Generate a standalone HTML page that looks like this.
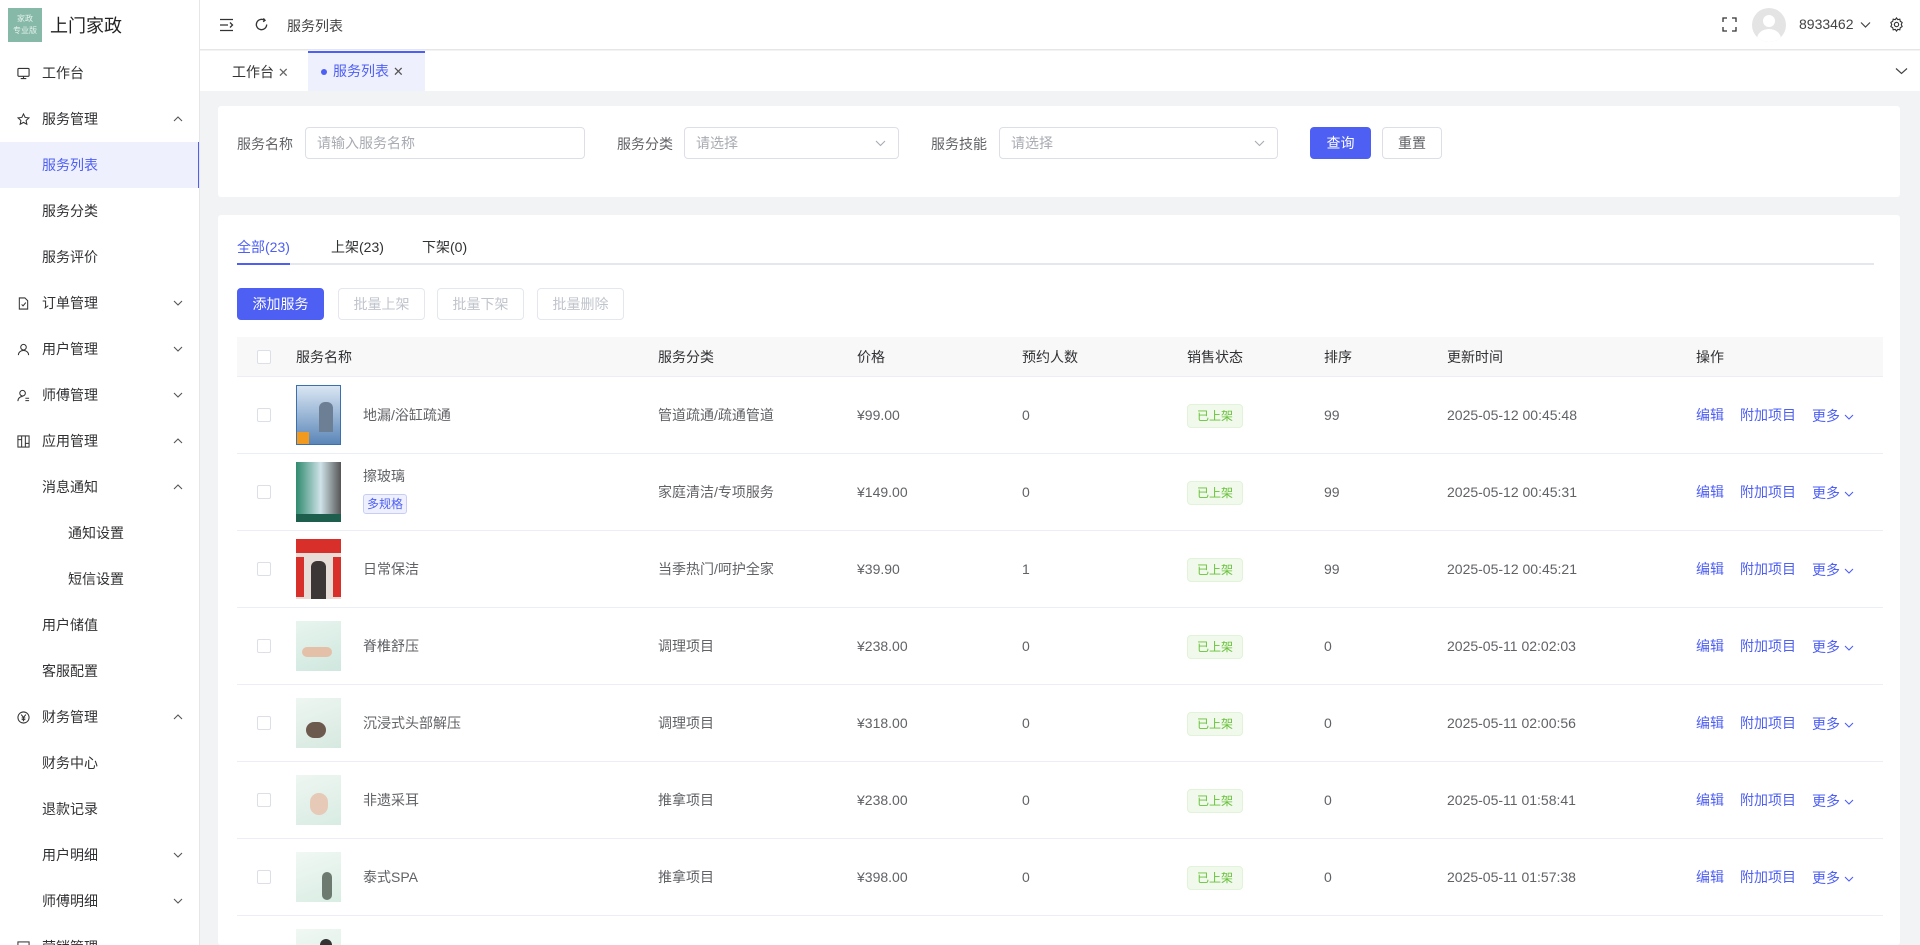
<!DOCTYPE html>
<html style="width:1920px;height:945px;overflow:hidden"><head><meta charset="utf-8"><style>
*{margin:0;padding:0;box-sizing:border-box}
body{width:1920px;height:945px;overflow:hidden;background:#f2f3f5;font-family:"Liberation Sans","Noto Sans CJK SC",sans-serif;font-size:14px;color:#333;position:relative}
.abs{position:absolute}
#side{position:absolute;left:0;top:0;width:200px;height:945px;background:#fff;border-right:1px solid #e6e6e6;overflow:hidden}
.mi{position:absolute;left:0;width:200px;height:46px;line-height:46px;color:#303133;font-size:14px}
.mi .t{position:absolute;left:42px}
.mi svg.ic{position:absolute;left:17px;top:17px}
.mi .ar{position:absolute;left:173px;top:19px}
.mi.act{background:#eef0fd;color:#4e5ff3;border-right:2px solid #4e5ff3}
#hdr{position:absolute;left:200px;top:0;width:1720px;height:50px;background:#fff;border-bottom:1px solid #e6e6e6}
#tabs{position:absolute;left:200px;top:51px;width:1720px;height:40px;background:#fff}
.card{position:absolute;background:#fff;border-radius:3px}
.inp{position:absolute;height:32px;border:1px solid #dcdfe6;border-radius:4px;color:#a8abb2;font-size:14px;line-height:30px;padding-left:11px;background:#fff}
.btn{position:absolute;height:32px;border-radius:4px;font-size:14px;line-height:30px;text-align:center}
.th{position:absolute;top:0;line-height:40px;color:#303133;font-size:14px}
.cell{position:absolute;color:#606266;font-size:14px;line-height:20px}
.cb{position:absolute;left:20px;width:14px;height:14px;border:1px solid #dcdfe6;border-radius:2px;background:#fff}
.tag{position:absolute;width:56px;height:24px;background:#f0f9eb;border:1px solid #e1f3d8;border-radius:4px;color:#67c23a;font-size:12px;line-height:22px;text-align:center}
.lnk{position:absolute;color:#4e5ff3;font-size:14px;line-height:20px}
.row{position:absolute;left:0;width:1646px;height:77px;border-bottom:1px solid #ebeef5}
.img{position:absolute;left:59px;top:8px;width:45px;height:60px}
</style></head><body>
<div id="side">
 <div class="abs" style="left:8px;top:8px;width:34px;height:34px;background:#86b9a7;color:#e6f2ee;font-size:8px;line-height:12px;text-align:center;padding-top:5px">家政<br>专业版</div>
 <div class="abs" style="left:50px;top:12px;font-size:18px;color:#222">上门家政</div>

 <div class="mi" style="top:50px"><svg class="ic" width="13" height="13" viewBox="0 0 14 14" fill="none" stroke="#333" stroke-width="1.2"><rect x="1" y="1.5" width="12" height="8.5" rx="1"/><path d="M7 10v2.5M4 12.5h6"/></svg><span class="t">工作台</span></div>
 <div class="mi" style="top:96px"><svg class="ic" width="13" height="13" viewBox="0 0 14 14" fill="none" stroke="#333" stroke-width="1.1"><path d="M7 1l1.8 3.8 4 .5-3 2.8.8 4L7 10.1 3.4 12.1l.8-4-3-2.8 4-.5z"/></svg><span class="t">服务管理</span><svg class="ar" width="10" height="8" viewBox="0 0 10 8"><path d="M1 6l4-4 4 4" fill="none" stroke="#555" stroke-width="1.1"/></svg></div>
 <div class="mi act" style="top:142px"><span class="t">服务列表</span></div>
 <div class="mi" style="top:188px"><span class="t">服务分类</span></div>
 <div class="mi" style="top:234px"><span class="t">服务评价</span></div>
 <div class="mi" style="top:280px"><svg class="ic" width="13" height="13" viewBox="0 0 14 14" fill="none" stroke="#333" stroke-width="1.1"><path d="M2.5 1h6l3 3v9h-9z"/><path d="M5 8l1.5 1.5L9.5 6"/></svg><span class="t">订单管理</span><svg class="ar" width="10" height="8" viewBox="0 0 10 8"><path d="M1 2l4 4 4-4" fill="none" stroke="#555" stroke-width="1.1"/></svg></div>
 <div class="mi" style="top:326px"><svg class="ic" width="13" height="13" viewBox="0 0 14 14" fill="none" stroke="#333" stroke-width="1.1"><circle cx="7" cy="4.5" r="3"/><path d="M1.5 13c0-3 2.5-5 5.5-5s5.5 2 5.5 5"/></svg><span class="t">用户管理</span><svg class="ar" width="10" height="8" viewBox="0 0 10 8"><path d="M1 2l4 4 4-4" fill="none" stroke="#555" stroke-width="1.1"/></svg></div>
 <div class="mi" style="top:372px"><svg class="ic" width="13" height="13" viewBox="0 0 14 14" fill="none" stroke="#333" stroke-width="1.1"><circle cx="6" cy="4.5" r="3"/><path d="M1 13c0-3 2.3-5 5-5M9 10h4M9 12.5h4"/></svg><span class="t">师傅管理</span><svg class="ar" width="10" height="8" viewBox="0 0 10 8"><path d="M1 2l4 4 4-4" fill="none" stroke="#555" stroke-width="1.1"/></svg></div>
 <div class="mi" style="top:418px"><svg class="ic" width="13" height="13" viewBox="0 0 14 14" fill="none" stroke="#333" stroke-width="1.1"><rect x="1" y="1" width="12" height="12"/><path d="M5 1v12M9 1v12M1 5h4M9 9h4"/></svg><span class="t">应用管理</span><svg class="ar" width="10" height="8" viewBox="0 0 10 8"><path d="M1 6l4-4 4 4" fill="none" stroke="#555" stroke-width="1.1"/></svg></div>
 <div class="mi" style="top:464px"><span class="t">消息通知</span><svg class="ar" width="10" height="8" viewBox="0 0 10 8"><path d="M1 6l4-4 4 4" fill="none" stroke="#555" stroke-width="1.1"/></svg></div>
 <div class="mi" style="top:510px"><span class="t" style="left:68px">通知设置</span></div>
 <div class="mi" style="top:556px"><span class="t" style="left:68px">短信设置</span></div>
 <div class="mi" style="top:602px"><span class="t">用户储值</span></div>
 <div class="mi" style="top:648px"><span class="t">客服配置</span></div>
 <div class="mi" style="top:694px"><svg class="ic" width="13" height="13" viewBox="0 0 14 14" fill="none" stroke="#333" stroke-width="1.1"><circle cx="7" cy="7" r="6"/><path d="M4.5 3.8L7 7l2.5-3.2M7 7v4M5 7.5h4M5 9.3h4"/></svg><span class="t">财务管理</span><svg class="ar" width="10" height="8" viewBox="0 0 10 8"><path d="M1 6l4-4 4 4" fill="none" stroke="#555" stroke-width="1.1"/></svg></div>
 <div class="mi" style="top:740px"><span class="t">财务中心</span></div>
 <div class="mi" style="top:786px"><span class="t">退款记录</span></div>
 <div class="mi" style="top:832px"><span class="t">用户明细</span><svg class="ar" width="10" height="8" viewBox="0 0 10 8"><path d="M1 2l4 4 4-4" fill="none" stroke="#555" stroke-width="1.1"/></svg></div>
 <div class="mi" style="top:878px"><span class="t">师傅明细</span><svg class="ar" width="10" height="8" viewBox="0 0 10 8"><path d="M1 2l4 4 4-4" fill="none" stroke="#555" stroke-width="1.1"/></svg></div>
 <div class="mi" style="top:924px"><svg class="ic" width="13" height="13" viewBox="0 0 14 14" fill="none" stroke="#333" stroke-width="1.1"><rect x="1" y="1" width="12" height="12"/></svg><span class="t">营销管理</span></div>
</div>

<div id="hdr">
 <svg class="abs" style="left:19px;top:18px" width="15" height="14" viewBox="0 0 15 14" fill="none" stroke="#333" stroke-width="1.3"><path d="M1 1.5h13M1 7h8M1 12.5h13M11 4.5l2.5 2.5L11 9.5"/></svg>
 <svg class="abs" style="left:54px;top:17px" width="15" height="15" viewBox="0 0 16 16" fill="none" stroke="#333" stroke-width="1.4"><path d="M13.5 8A5.5 5.5 0 1 1 11 3.4"/><path d="M10 1.5l1.8 2-2 1.6"/></svg>
 <div class="abs" style="left:87px;top:16px;color:#444">服务列表</div>
 <svg class="abs" style="left:1522px;top:17px" width="15" height="15" viewBox="0 0 15 15" fill="none" stroke="#333" stroke-width="1.3"><path d="M1 5V1h4M10 1h4v4M14 10v4h-4M5 14H1v-4"/></svg>
 <div class="abs" style="left:1552px;top:8px;width:34px;height:34px;border-radius:50%;background:#e4e4e4;overflow:hidden"><div class="abs" style="left:11px;top:7px;width:12px;height:12px;border-radius:50%;background:#fff"></div><div class="abs" style="left:5px;top:21px;width:24px;height:20px;border-radius:50%;background:#fff"></div></div>
 <div class="abs" style="left:1599px;top:16px;color:#444">8933462</div>
 <svg class="abs" style="left:1660px;top:21px" width="11" height="8" viewBox="0 0 11 8"><path d="M1 1.5l4.5 4.5 4.5-4.5" fill="none" stroke="#444" stroke-width="1.2"/></svg>
 <svg class="abs" style="left:1689px;top:17px" width="15" height="15" viewBox="0 0 16 16" fill="none" stroke="#333" stroke-width="1.2"><circle cx="8" cy="8" r="2.3"/><path d="M8 1l1.3 1.8 2.2-.5.5 2.2L14 5.8l-.9 2.2.9 2.2-2 1.3-.5 2.2-2.2-.5L8 15l-1.3-1.8-2.2.5-.5-2.2L2 10.2 2.9 8 2 5.8l2-1.3.5-2.2 2.2.5z"/></svg>
</div>

<div id="tabs">
 <div class="abs" style="left:32px;top:11px;color:#333">工作台 <span style="font-size:13px;color:#666">✕</span></div>
 <div class="abs" style="left:108px;top:0;width:117px;height:40px;background:#eef0fd;border-top:2px solid #4e5ff3;color:#4e5ff3;line-height:36px;padding-left:13px"><span style="display:inline-block;width:6px;height:6px;border-radius:50%;background:#4e5ff3;vertical-align:middle;margin-right:6px"></span>服务列表 <span style="font-size:13px;color:#555">✕</span></div>
 <svg class="abs" style="left:1695px;top:16px" width="13" height="8" viewBox="0 0 13 8"><path d="M1 1.5l5.5 5 5.5-5" fill="none" stroke="#444" stroke-width="1.2"/></svg>
</div>

<div class="card" style="left:218px;top:106px;width:1682px;height:91px">
 <div class="abs" style="left:19px;top:28px;color:#606266">服务名称</div>
 <div class="inp" style="left:87px;top:21px;width:280px">请输入服务名称</div>
 <div class="abs" style="left:399px;top:28px;color:#606266">服务分类</div>
 <div class="inp" style="left:466px;top:21px;width:215px">请选择<svg class="abs" style="right:12px;top:12px" width="11" height="7" viewBox="0 0 11 7"><path d="M1 1l4.5 4.5L10 1" fill="none" stroke="#a8abb2" stroke-width="1.1"/></svg></div>
 <div class="abs" style="left:713px;top:28px;color:#606266">服务技能</div>
 <div class="inp" style="left:781px;top:21px;width:279px">请选择<svg class="abs" style="right:12px;top:12px" width="11" height="7" viewBox="0 0 11 7"><path d="M1 1l4.5 4.5L10 1" fill="none" stroke="#a8abb2" stroke-width="1.1"/></svg></div>
 <div class="btn" style="left:1092px;top:21px;width:61px;background:#4e5ff3;color:#fff;border:1px solid #4e5ff3">查询</div>
 <div class="btn" style="left:1164px;top:21px;width:60px;border:1px solid #dcdfe6;color:#606266">重置</div>
</div>

<div class="card" style="left:218px;top:215px;width:1682px;height:730px;overflow:hidden">
 <div class="abs" style="left:19px;top:22px;color:#4e5ff3">全部(23)</div>
 <div class="abs" style="left:113px;top:22px;color:#303133">上架(23)</div>
 <div class="abs" style="left:204px;top:22px;color:#303133">下架(0)</div>
 <div class="abs" style="left:19px;top:48px;width:1637px;height:2px;background:#e4e7ed"></div>
 <div class="abs" style="left:19px;top:48px;width:53px;height:2px;background:#4e5ff3"></div>
 <div class="btn" style="left:19px;top:73px;width:87px;background:#4e5ff3;color:#fff;border:1px solid #4e5ff3">添加服务</div>
 <div class="btn" style="left:120px;top:73px;width:87px;border:1px solid #e4e7ed;color:#c0c4cc">批量上架</div>
 <div class="btn" style="left:219px;top:73px;width:87px;border:1px solid #e4e7ed;color:#c0c4cc">批量下架</div>
 <div class="btn" style="left:319px;top:73px;width:87px;border:1px solid #e4e7ed;color:#c0c4cc">批量删除</div>

 <div class="abs" style="left:19px;top:122px;width:1646px;height:40px;background:#f8f8f9;border-bottom:1px solid #ebeef5">
   <div class="cb" style="top:13px"></div>
   <div class="th" style="left:59px">服务名称</div>
   <div class="th" style="left:421px">服务分类</div>
   <div class="th" style="left:620px">价格</div>
   <div class="th" style="left:785px">预约人数</div>
   <div class="th" style="left:950px">销售状态</div>
   <div class="th" style="left:1087px">排序</div>
   <div class="th" style="left:1210px">更新时间</div>
   <div class="th" style="left:1459px">操作</div>
 </div>

<div class="abs" style="left:19px;top:162px;width:1646px;height:568px;overflow:hidden">
 <div class="row" style="top:0">
  <div class="cb" style="top:31px"></div>
  <div class="img" style="background:linear-gradient(180deg,#d9e6f3,#5b86b8);border:1px solid #3a6fb0"><div style="position:absolute;left:0;bottom:0;width:12px;height:12px;background:#f29a1f"></div><div style="position:absolute;left:22px;top:16px;width:14px;height:30px;background:#6d7f94;border-radius:6px 6px 0 0"></div></div>
  <div class="cell" style="left:126px;top:28px">地漏/浴缸疏通</div>
  <div class="cell" style="left:421px;top:28px">管道疏通/疏通管道</div>
  <div class="cell" style="left:620px;top:28px">¥99.00</div>
  <div class="cell" style="left:785px;top:28px">0</div>
  <div class="tag" style="left:950px;top:27px">已上架</div>
  <div class="cell" style="left:1087px;top:28px">99</div>
  <div class="cell" style="left:1210px;top:28px">2025-05-12 00:45:48</div>
  <div class="lnk" style="left:1459px;top:28px">编辑</div><div class="lnk" style="left:1503px;top:28px">附加项目</div><div class="lnk" style="left:1575px;top:29px">更多 <svg width="10" height="7" viewBox="0 0 10 7"><path d="M1 1l4 4 4-4" fill="none" stroke="#4e5ff3" stroke-width="1.1"/></svg></div>
 </div>
 <div class="row" style="top:77px">
  <div class="cb" style="top:31px"></div>
  <div class="img" style="background:linear-gradient(90deg,#2f8a6e,#cfe2e8 55%,#555 100%)"><div style="position:absolute;left:0;bottom:0;width:45px;height:8px;background:#1d5f4c"></div></div>
  <div class="cell" style="left:126px;top:12px">擦玻璃</div>
  <div class="abs" style="left:126px;top:40px;width:44px;height:20px;background:#eef0fd;border:1px solid #c8cdf8;border-radius:3px;color:#4e5ff3;font-size:12px;line-height:18px;text-align:center">多规格</div>
  <div class="cell" style="left:421px;top:28px">家庭清洁/专项服务</div>
  <div class="cell" style="left:620px;top:28px">¥149.00</div>
  <div class="cell" style="left:785px;top:28px">0</div>
  <div class="tag" style="left:950px;top:27px">已上架</div>
  <div class="cell" style="left:1087px;top:28px">99</div>
  <div class="cell" style="left:1210px;top:28px">2025-05-12 00:45:31</div>
  <div class="lnk" style="left:1459px;top:28px">编辑</div><div class="lnk" style="left:1503px;top:28px">附加项目</div><div class="lnk" style="left:1575px;top:29px">更多 <svg width="10" height="7" viewBox="0 0 10 7"><path d="M1 1l4 4 4-4" fill="none" stroke="#4e5ff3" stroke-width="1.1"/></svg></div>
 </div>
 <div class="row" style="top:154px">
  <div class="cb" style="top:31px"></div>
  <div class="img" style="background:#e9ddd8"><div style="position:absolute;left:0;top:0;width:45px;height:14px;background:#d92f2a"></div><div style="position:absolute;left:0;top:18px;width:8px;height:40px;background:#d92f2a"></div><div style="position:absolute;right:0;top:18px;width:8px;height:40px;background:#d92f2a"></div><div style="position:absolute;left:15px;top:22px;width:15px;height:38px;background:#3d3636;border-radius:6px 6px 0 0"></div></div>
  <div class="cell" style="left:126px;top:28px">日常保洁</div>
  <div class="cell" style="left:421px;top:28px">当季热门/呵护全家</div>
  <div class="cell" style="left:620px;top:28px">¥39.90</div>
  <div class="cell" style="left:785px;top:28px">1</div>
  <div class="tag" style="left:950px;top:27px">已上架</div>
  <div class="cell" style="left:1087px;top:28px">99</div>
  <div class="cell" style="left:1210px;top:28px">2025-05-12 00:45:21</div>
  <div class="lnk" style="left:1459px;top:28px">编辑</div><div class="lnk" style="left:1503px;top:28px">附加项目</div><div class="lnk" style="left:1575px;top:29px">更多 <svg width="10" height="7" viewBox="0 0 10 7"><path d="M1 1l4 4 4-4" fill="none" stroke="#4e5ff3" stroke-width="1.1"/></svg></div>
 </div>
 <div class="row" style="top:231px">
  <div class="cb" style="top:31px"></div>
  <div class="img" style="background:linear-gradient(160deg,#e8f5ef,#cfe7de);height:50px;top:13px"><div style="position:absolute;left:6px;top:26px;width:30px;height:10px;background:#e5c0a9;border-radius:5px"></div></div>
  <div class="cell" style="left:126px;top:28px">脊椎舒压</div>
  <div class="cell" style="left:421px;top:28px">调理项目</div>
  <div class="cell" style="left:620px;top:28px">¥238.00</div>
  <div class="cell" style="left:785px;top:28px">0</div>
  <div class="tag" style="left:950px;top:27px">已上架</div>
  <div class="cell" style="left:1087px;top:28px">0</div>
  <div class="cell" style="left:1210px;top:28px">2025-05-11 02:02:03</div>
  <div class="lnk" style="left:1459px;top:28px">编辑</div><div class="lnk" style="left:1503px;top:28px">附加项目</div><div class="lnk" style="left:1575px;top:29px">更多 <svg width="10" height="7" viewBox="0 0 10 7"><path d="M1 1l4 4 4-4" fill="none" stroke="#4e5ff3" stroke-width="1.1"/></svg></div>
 </div>
 <div class="row" style="top:308px">
  <div class="cb" style="top:31px"></div>
  <div class="img" style="background:linear-gradient(160deg,#eef6f1,#d6e9e0);height:50px;top:13px"><div style="position:absolute;left:10px;top:24px;width:20px;height:16px;background:#6d5a4f;border-radius:8px"></div></div>
  <div class="cell" style="left:126px;top:28px">沉浸式头部解压</div>
  <div class="cell" style="left:421px;top:28px">调理项目</div>
  <div class="cell" style="left:620px;top:28px">¥318.00</div>
  <div class="cell" style="left:785px;top:28px">0</div>
  <div class="tag" style="left:950px;top:27px">已上架</div>
  <div class="cell" style="left:1087px;top:28px">0</div>
  <div class="cell" style="left:1210px;top:28px">2025-05-11 02:00:56</div>
  <div class="lnk" style="left:1459px;top:28px">编辑</div><div class="lnk" style="left:1503px;top:28px">附加项目</div><div class="lnk" style="left:1575px;top:29px">更多 <svg width="10" height="7" viewBox="0 0 10 7"><path d="M1 1l4 4 4-4" fill="none" stroke="#4e5ff3" stroke-width="1.1"/></svg></div>
 </div>
 <div class="row" style="top:385px">
  <div class="cb" style="top:31px"></div>
  <div class="img" style="background:linear-gradient(160deg,#eef6f1,#d8ece3);height:50px;top:13px"><div style="position:absolute;left:14px;top:18px;width:18px;height:22px;background:#e6c9b6;border-radius:9px"></div></div>
  <div class="cell" style="left:126px;top:28px">非遗采耳</div>
  <div class="cell" style="left:421px;top:28px">推拿项目</div>
  <div class="cell" style="left:620px;top:28px">¥238.00</div>
  <div class="cell" style="left:785px;top:28px">0</div>
  <div class="tag" style="left:950px;top:27px">已上架</div>
  <div class="cell" style="left:1087px;top:28px">0</div>
  <div class="cell" style="left:1210px;top:28px">2025-05-11 01:58:41</div>
  <div class="lnk" style="left:1459px;top:28px">编辑</div><div class="lnk" style="left:1503px;top:28px">附加项目</div><div class="lnk" style="left:1575px;top:29px">更多 <svg width="10" height="7" viewBox="0 0 10 7"><path d="M1 1l4 4 4-4" fill="none" stroke="#4e5ff3" stroke-width="1.1"/></svg></div>
 </div>
 <div class="row" style="top:462px">
  <div class="cb" style="top:31px"></div>
  <div class="img" style="background:linear-gradient(160deg,#f1f8f4,#d9ede3);height:50px;top:13px"><div style="position:absolute;left:26px;top:20px;width:10px;height:28px;background:#6c7a70;border-radius:5px"></div></div>
  <div class="cell" style="left:126px;top:28px">泰式SPA</div>
  <div class="cell" style="left:421px;top:28px">推拿项目</div>
  <div class="cell" style="left:620px;top:28px">¥398.00</div>
  <div class="cell" style="left:785px;top:28px">0</div>
  <div class="tag" style="left:950px;top:27px">已上架</div>
  <div class="cell" style="left:1087px;top:28px">0</div>
  <div class="cell" style="left:1210px;top:28px">2025-05-11 01:57:38</div>
  <div class="lnk" style="left:1459px;top:28px">编辑</div><div class="lnk" style="left:1503px;top:28px">附加项目</div><div class="lnk" style="left:1575px;top:29px">更多 <svg width="10" height="7" viewBox="0 0 10 7"><path d="M1 1l4 4 4-4" fill="none" stroke="#4e5ff3" stroke-width="1.1"/></svg></div>
 </div>
 <div class="row" style="top:539px">
  <div class="img" style="background:linear-gradient(160deg,#f1f8f4,#d9ede3);height:50px;top:13px"><div style="position:absolute;left:24px;top:10px;width:12px;height:20px;background:#333;border-radius:6px"></div></div>
 </div>
</div>
</div>
</body></html>
